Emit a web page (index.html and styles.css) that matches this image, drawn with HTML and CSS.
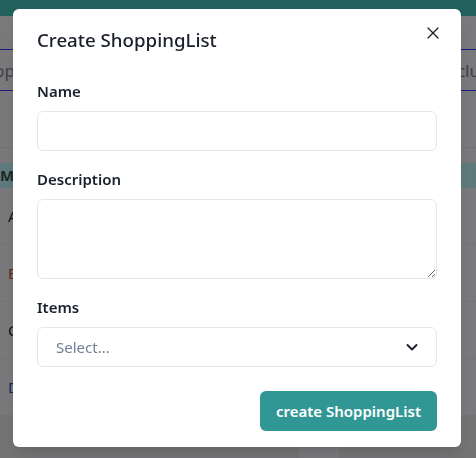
FILE: index.html
```html
<!DOCTYPE html>
<html lang="en">
<head>
<meta charset="utf-8">
<title>Create ShoppingList</title>
<link rel="stylesheet" href="styles.css">
</head>
<body>
<div class="page">
  <header class="topbar"></header>
  <nav class="tabs">
    <span class="tab tab-left">Shoppi</span>
    <span class="tab tab-right">clu</span>
  </nav>
  <div class="toolbar"></div>
  <div class="table">
    <div class="thead">M</div>
    <div class="row"><span class="cell">A</span></div>
    <div class="row"><span class="cell red">B</span></div>
    <div class="row"><span class="cell">C</span></div>
    <div class="row"><span class="cell blue">D</span></div>
    <div class="row last">
      <span class="cell">Z</span>
      <span class="del-cell"><span class="del">✕</span></span>
      <span class="edit-cell"><span class="edit">I</span></span>
    </div>
  </div>
</div>
<div class="overlay"></div>
<div class="modal-wrap">
  <section class="modal" role="dialog">
    <header class="modal-header">Create ShoppingList</header>
    <button class="close" aria-label="Close">
      <svg viewBox="0 0 24 24" width="12" height="12"><path d="M2 2 L22 22 M22 2 L2 22" stroke="currentColor" stroke-width="2.6" stroke-linecap="round"/></svg>
    </button>
    <div class="modal-body">
      <div class="field">
        <label class="label">Name</label>
        <input class="input" type="text">
      </div>
      <div class="field">
        <label class="label">Description</label>
        <textarea class="textarea"></textarea>
      </div>
      <div class="field">
        <label class="label">Items</label>
        <div class="select">
          <span class="placeholder">Select...</span>
          <svg class="chevron" viewBox="0 0 20 20" width="20" height="20"><path d="M5.5 8 L10 12.5 L14.5 8" fill="none" stroke="#1a202c" stroke-width="1.9" stroke-linecap="round" stroke-linejoin="round"/></svg>
        </div>
      </div>
    </div>
    <footer class="modal-footer">
      <button class="btn">create ShoppingList</button>
    </footer>
  </section>
</div>
</body>
</html>
```

FILE: styles.css
```css
html, body {
  margin: 0;
  padding: 0;
}
body {
  font-family: "Noto Sans", "Open Sans", sans-serif;
  color: #1a202c;
  width: 476px;
  height: 458px;
  overflow: hidden;
}
.page {
  height: 458px;
  background: #e8e8ec;
  overflow: hidden;
}
.topbar {
  height: 16px;
  background: #40b8ae;
}
.tabs {
  margin-top: 33px;
  height: 40px;
  border-top: 1px solid #3636f8;
  border-bottom: 1px solid #3636f8;
  display: flex;
  justify-content: space-between;
  align-items: center;
  color: #7a7a86;
  font-size: 17px;
}
.tab-left {
  margin-left: -36px;
}
.tab-right {
  margin-right: -4px;
}
.toolbar {
  height: 56px;
  border-bottom: 1px solid #d8d8dc;
}
.table {
  margin-top: 15px;
}
.thead {
  height: 25px;
  background: #b6eaee;
  font-size: 15px;
  font-weight: 700;
  line-height: 25px;
  color: #3a4a4c;
  padding-left: 0;
}
.row {
  height: 56px;
  border-bottom: 1px solid #dcdce0;
  display: flex;
  align-items: center;
  font-size: 15px;
}
.row.last {
  border-bottom: none;
  align-items: flex-end;
  background: #dcdcdf;
}
.cell {
  padding-left: 8px;
}
.red { color: #b84a2a; }
.blue { color: #2a4aa8; }
.del-cell {
  margin-left: 282px;
  width: 40px;
  height: 30px;
  background: #e6e6ea;
  display: flex;
  justify-content: center;
  align-items: flex-end;
}
.del {
  color: #e53e3e;
  font-size: 22px;
  line-height: 12px;
}
.edit-cell {
  margin-left: 52px;
  width: 38px;
  height: 12px;
  border-left: 1px solid #5040a0;
  border-right: 1px solid #5040a0;
  display: flex;
  justify-content: center;
  color: #5040a0;
  font-size: 14px;
  line-height: 12px;
}
.overlay {
  position: fixed;
  inset: 0;
  background: rgba(0, 0, 0, 0.48);
}
.modal-wrap {
  position: fixed;
  inset: 0;
  display: flex;
  align-items: flex-start;
  padding: 9px 0 0 13px;
}
.modal {
  position: relative;
  width: 448px;
  background: #fff;
  border-radius: 6px;
  box-shadow: 0 10px 15px -3px rgba(0,0,0,0.1), 0 4px 6px -2px rgba(0,0,0,0.05);
}
.modal-header {
  padding: 16px 24px;
  font-size: 18.7px;
  font-weight: 500;
  line-height: 30px;
}
.close {
  position: absolute;
  top: 8px;
  right: 12px;
  width: 32px;
  height: 32px;
  border: none;
  background: transparent;
  display: flex;
  align-items: center;
  justify-content: center;
  color: #1a202c;
  padding: 0;
  border-radius: 6px;
}
.modal-body {
  padding: 8px 24px;
  display: flex;
  flex-direction: column;
  gap: 16px;
}
.field {
  display: flex;
  flex-direction: column;
}
.label {
  font-size: 15px;
  font-weight: 600;
  line-height: 24px;
  margin-bottom: 8px;
}
.input, .textarea, .select {
  box-sizing: border-box;
  width: 100%;
  border: 1px solid #e2e8f0;
  border-radius: 6px;
  font-family: inherit;
  font-size: 15px;
  background: #fff;
  margin: 0;
}
.input {
  height: 40px;
  padding: 0 16px;
}
.textarea {
  height: 80px;
  padding: 8px 16px;
  resize: vertical;
  display: block;
}
.select {
  height: 40px;
  display: flex;
  align-items: center;
  justify-content: space-between;
  padding: 0 14px 0 18px;
}
.placeholder {
  color: #718096;
  font-size: 15px;
}
.chevron {
  display: block;
}
.modal-footer {
  padding: 16px 24px;
  display: flex;
  justify-content: flex-end;
}
.btn {
  height: 40px;
  padding: 0 16px;
  border: none;
  border-radius: 6px;
  background: #319795;
  color: #fff;
  font-family: inherit;
  font-size: 15px;
  font-weight: 600;
}
```
